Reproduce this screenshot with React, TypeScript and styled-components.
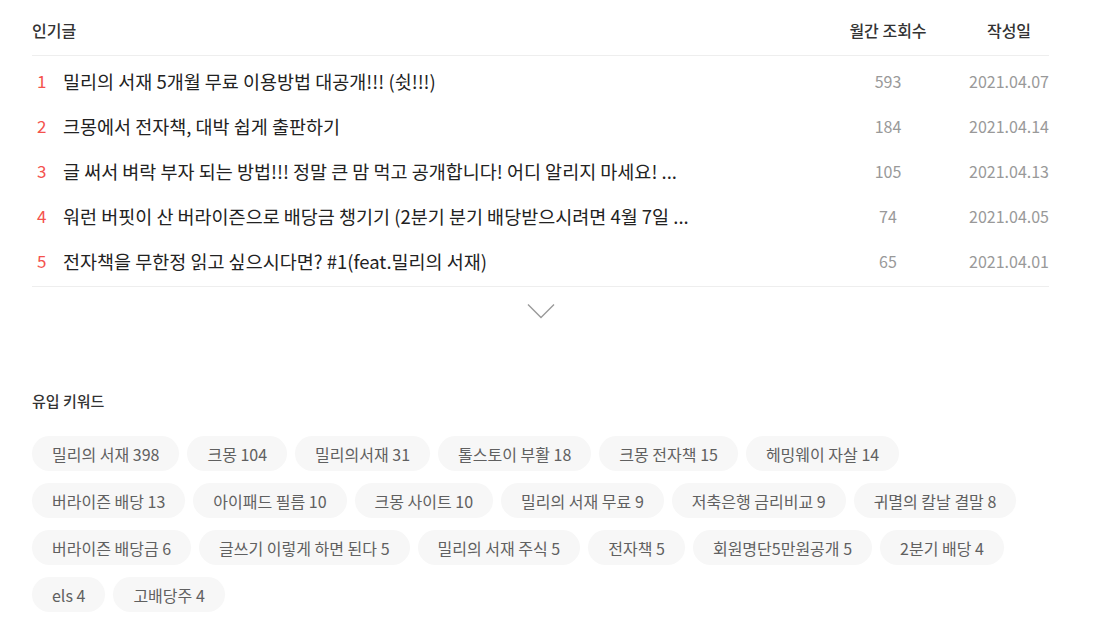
import styled, { createGlobalStyle } from 'styled-components';

const GlobalStyle = createGlobalStyle`
  body {
    margin: 0;
    background: #fff;
    font-family: 'Noto Sans CJK KR', 'Noto Sans', sans-serif;
    color: #333;
  }
`;

const Page = styled.div`
  padding: 0 46px 0 32px;
`;

const Section = styled.section`
  display: flex;
  flex-direction: column;
`;

const TableHead = styled.div`
  display: grid;
  grid-template-columns: 1fr 120px 80px;
  column-gap: 21px;
  align-items: center;
  height: 51px;
  padding-top: 4px;
  border-bottom: 1px solid #eee;
  font-size: 16px;
  font-weight: 500;
  color: #333;
`;

const HeadCell = styled.div<{ $center?: boolean }>`
  text-align: ${(p) => (p.$center ? 'center' : 'left')};
  white-space: nowrap;
`;

const List = styled.ol`
  list-style: none;
  margin: 0;
  padding: 2px 0 3px;
  border-bottom: 1px solid #eee;
`;

const Row = styled.li`
  display: grid;
  grid-template-columns: 1fr 120px 80px;
  column-gap: 21px;
  align-items: center;
  height: 45px;
`;

const TitleCell = styled.div`
  display: flex;
  align-items: center;
  min-width: 0;
`;

const Rank = styled.span`
  width: 31px;
  flex: none;
  padding-left: 5px;
  box-sizing: border-box;
  font-size: 17px;
  color: #f4524d;
`;

const Title = styled.a`
  max-width: 690px;
  font-size: 18.5px;
  color: #222;
  text-decoration: none;
  white-space: nowrap;
  overflow: hidden;
  text-overflow: ellipsis;
`;

const Meta = styled.div`
  text-align: center;
  font-size: 16px;
  color: #999;
  white-space: nowrap;
`;

const MoreButton = styled.button`
  align-self: center;
  display: flex;
  margin-top: 16px;
  padding: 0;
  border: 0;
  background: none;
  cursor: pointer;
`;

const KeywordTitle = styled.h2`
  margin: 72px 0 0;
  font-size: 15px;
  font-weight: 500;
  color: #333;
  line-height: 20px;
`;

const TagList = styled.div`
  display: flex;
  flex-wrap: wrap;
  gap: 12px 8px;
  margin-top: 25px;
`;

const Tag = styled.span`
  display: inline-flex;
  align-items: center;
  height: 35px;
  padding: 0 20px;
  border-radius: 18px;
  background: #f7f7f7;
  font-size: 16px;
  color: #606060;
  white-space: nowrap;
`;

// titles are cut the same way the blog list shows them
const posts = [
  { title: '밀리의 서재 5개월 무료 이용방법 대공개!!! (쉿!!!)', views: 593, date: '2021.04.07' },
  { title: '크몽에서 전자책, 대박 쉽게 출판하기', views: 184, date: '2021.04.14' },
  { title: '글 써서 벼락 부자 되는 방법!!! 정말 큰 맘 먹고 공개합니다! 어디 알리지 마세요! ...', views: 105, date: '2021.04.13' },
  { title: '워런 버핏이 산 버라이즌으로 배당금 챙기기 (2분기 분기 배당받으시려면 4월 7일 ...', views: 74, date: '2021.04.05' },
  { title: '전자책을 무한정 읽고 싶으시다면? #1(feat.밀리의 서재)', views: 65, date: '2021.04.01' },
];

const keywords: [string, number][] = [
  ['밀리의 서재', 398],
  ['크몽', 104],
  ['밀리의서재', 31],
  ['톨스토이 부활', 18],
  ['크몽 전자책', 15],
  ['헤밍웨이 자살', 14],
  ['버라이즌 배당', 13],
  ['아이패드 필름', 10],
  ['크몽 사이트', 10],
  ['밀리의 서재 무료', 9],
  ['저축은행 금리비교', 9],
  ['귀멸의 칼날 결말', 8],
  ['버라이즌 배당금', 6],
  ['글쓰기 이렇게 하면 된다', 5],
  ['밀리의 서재 주식', 5],
  ['전자책', 5],
  ['회원명단5만원공개', 5],
  ['2분기 배당', 4],
  ['els', 4],
  ['고배당주', 4],
];

export default function App() {
  return (
    <Page>
      <GlobalStyle />
      <Section>
        <TableHead>
          <HeadCell>인기글</HeadCell>
          <HeadCell $center>월간 조회수</HeadCell>
          <HeadCell $center>작성일</HeadCell>
        </TableHead>
        <List>
          {posts.map((p, i) => (
            <Row key={p.date + i}>
              <TitleCell>
                <Rank>{i + 1}</Rank>
                <Title href='#'>{p.title}</Title>
              </TitleCell>
              <Meta>{p.views}</Meta>
              <Meta>{p.date}</Meta>
            </Row>
          ))}
        </List>
        <MoreButton aria-label='더보기'>
          <svg width='28' height='16' viewBox='0 0 28 16' fill='none'>
            <path d='M1 1.5 L14 14.5 L27 1.5' stroke='#9a9a9a' strokeWidth='1.4' />
          </svg>
        </MoreButton>
      </Section>
      <Section>
        <KeywordTitle>유입 키워드</KeywordTitle>
        <TagList>
          {keywords.map(([word, count]) => (
            <Tag key={word}>
              {word} {count}
            </Tag>
          ))}
        </TagList>
      </Section>
    </Page>
  );
}
